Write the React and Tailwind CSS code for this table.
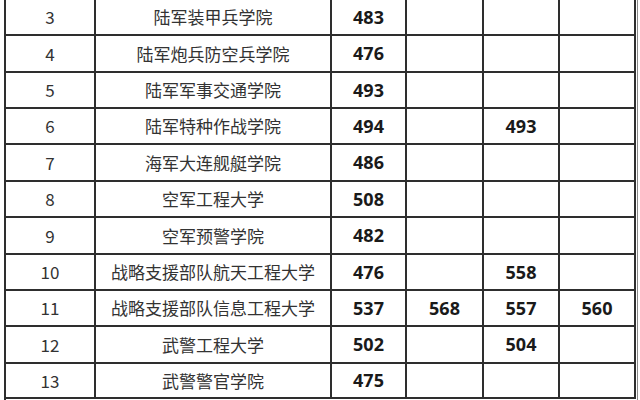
const rows = [
  ['3', '陆军装甲兵学院', '483', '', '', '', 'h-[36px]'],
  ['4', '陆军炮兵防空兵学院', '476', '', '', '', 'h-[37px]'],
  ['5', '陆军军事交通学院', '493', '', '', '', 'h-[36px]'],
  ['6', '陆军特种作战学院', '494', '', '493', '', 'h-[36px]'],
  ['7', '海军大连舰艇学院', '486', '', '', '', 'h-[37px]'],
  ['8', '空军工程大学', '508', '', '', '', 'h-[36px]'],
  ['9', '空军预警学院', '482', '', '', '', 'h-[37px]'],
  ['10', '战略支援部队航天工程大学', '476', '', '558', '', 'h-[36px]'],
  ['11', '战略支援部队信息工程大学', '537', '568', '557', '560', 'h-[36px]'],
  ['12', '武警工程大学', '502', '', '504', '', 'h-[37px]'],
  ['13', '武警警官学院', '475', '', '', '', 'h-[35px]'],
]

const cjkCell = "font-['Noto_Sans_CJK_SC','Noto_Sans',sans-serif] border-r-2 border-[#2e2e2e] flex items-center justify-center text-[17px] text-[#333] whitespace-nowrap"
const numCell = "font-['Open_Sans','Liberation_Sans',sans-serif] border-r-2 border-[#2e2e2e] flex items-center justify-center text-[18px] font-bold text-[#1a1a1a]"

export default function App() {
  return (
    <div className="w-[640px] h-[400px] overflow-hidden bg-white">
      <div className="ml-[4px] w-[634px] flex">
        <div className="border-l-2 border-[#2e2e2e]">
          {rows.map((r) => (
            <div key={r[0]} className={`flex border-b-2 border-[#2e2e2e] ${r[6]}`}>
              <div className={`w-[90px] ${cjkCell}`}>{r[0]}</div>
              <div className={`w-[236px] ${cjkCell}`}>{r[1]}</div>
              <div className={`w-[75px] ${numCell}`}>{r[2]}</div>
              <div className={`w-[77px] ${numCell}`}>{r[3]}</div>
              <div className={`w-[76px] ${numCell}`}>{r[4]}</div>
              <div className={`w-[76px] ${numCell}`}>{r[5]}</div>
            </div>
          ))}
        </div>
        <div className="w-[1px] ml-[1px] h-[400px] bg-[#8a8a8a]" />
      </div>
    </div>
  )
}
